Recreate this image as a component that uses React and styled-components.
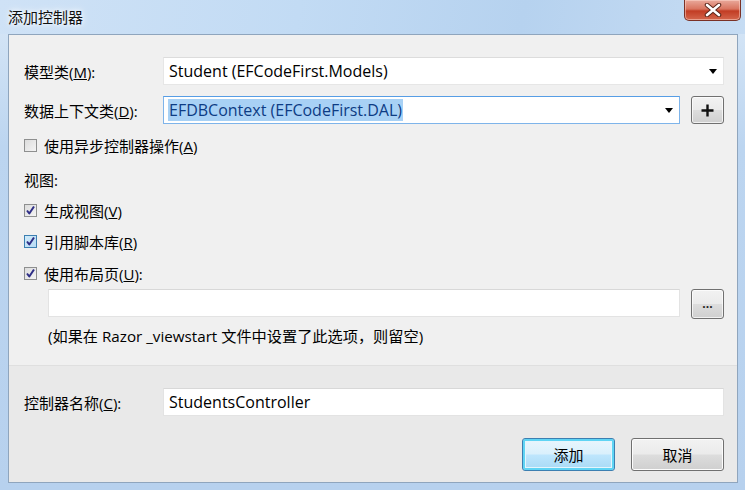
import styled, { createGlobalStyle } from "styled-components";

const GlobalStyle = createGlobalStyle`
  html, body { margin: 0; padding: 0; background: #bcd4ee; }
  body { font-family: "Open Sans", "Noto Sans CJK SC", sans-serif; }
`;

const FONT = `"Open Sans", "Noto Sans CJK SC", sans-serif`;

function ArrowIcon() {
  return (
    <svg width="8" height="5" viewBox="0 0 8 5">
      <path d="M0 0 H8 L4 5 Z" fill="#000" />
    </svg>
  );
}

function CheckMark() {
  return (
    <svg width="11" height="11" viewBox="0 0 11 11">
      <path d="M2 5.5 L4.3 8.5 L9 1.5" fill="none" stroke="#2e2e86" strokeWidth="2" strokeLinejoin="round" />
    </svg>
  );
}

function Checkbox({ checked, hot, children }) {
  return (
    <CheckRow>
      <Box $hot={hot}>{checked && <CheckMark />}</Box>
      <span>{children}</span>
    </CheckRow>
  );
}

function Select({ value, focused, highlight }) {
  return (
    <SelectBox $focused={focused}>
      <SelectText $highlight={highlight}>{value}</SelectText>
      <ArrowIcon />
    </SelectBox>
  );
}

export default function App() {
  return (
    <>
      <GlobalStyle />
      <Window>
        <TitleBar>
          <Title>添加控制器</Title>
          <CloseButton>
            <svg width="18" height="14" viewBox="0 0 18 14">
              <path d="M3 2 L15 12 M15 2 L3 12" stroke="#5a2418" strokeWidth="4.5" strokeLinecap="round" />
              <path d="M3 2 L15 12 M15 2 L3 12" stroke="#fff" strokeWidth="2.6" strokeLinecap="round" />
            </svg>
          </CloseButton>
        </TitleBar>
        <Body>
          <Upper>
            <FieldRow $top={22}>
              <Label><span>模型类(<u>M</u>):</span></Label>
              <Select value="Student (EFCodeFirst.Models)" />
            </FieldRow>
            <FieldRow $top={11}>
              <Label><span>数据上下文类(<u>D</u>):</span></Label>
              <Select value="EFDBContext (EFCodeFirst.DAL)" focused highlight />
              <SmallButton>
                <svg width="13" height="13" viewBox="0 0 13 13">
                  <path d="M6.5 0.5 V12.5 M0.5 6.5 H12.5" stroke="#111" strokeWidth="2.4" />
                </svg>
              </SmallButton>
            </FieldRow>
            <Line $top={11}>
              <Checkbox>使用异步控制器操作(<u>A</u>)</Checkbox>
            </Line>
            <Line $top={14}>
              <Caption>视图:</Caption>
            </Line>
            <Line $top={11}>
              <Checkbox checked>生成视图(<u>V</u>)</Checkbox>
            </Line>
            <Line $top={11}>
              <Checkbox checked hot>引用脚本库(<u>R</u>)</Checkbox>
            </Line>
            <Line $top={12}>
              <Checkbox checked>使用布局页(<u>U</u>):</Checkbox>
            </Line>
            <IndentRow>
              <TextInput />
              <SmallButton $dots>...</SmallButton>
            </IndentRow>
            <Hint>(如果在 Razor _viewstart 文件中设置了此选项，则留空)</Hint>
          </Upper>
          <Lower>
            <FieldRow $top={0}>
              <Label><span>控制器名称(<u>C</u>):</span></Label>
              <TextInput>StudentsController</TextInput>
            </FieldRow>
            <Buttons>
              <DialogButton $default>添加</DialogButton>
              <DialogButton>取消</DialogButton>
            </Buttons>
          </Lower>
        </Body>
      </Window>
    </>
  );
}

const Window = styled.div`
  width: 745px;
  height: 490px;
  box-sizing: border-box;
  display: flex;
  flex-direction: column;
  background: linear-gradient(180deg, #d9e8f7 0%, #bcd5f0 30%, #b7d1ee 100%);
  font-family: ${FONT};
  font-size: 15px;
  color: #000;
`;

const TitleBar = styled.div`
  height: 34px;
  flex: none;
  display: flex;
  align-items: flex-start;
  justify-content: space-between;
  padding: 0 4px 0 8px;
  background: linear-gradient(100deg, #cfe2f6 0%, #c2dbf4 40%, #b6d2ef 70%, #c6dcf3 100%);
`;

const Title = styled.div`
  margin-top: 7px;
  font-size: 15px;
  line-height: 20px;
  color: #111;
  text-shadow: 0 0 8px #fff, 0 0 4px #fff;
`;

const CloseButton = styled.div`
  width: 57px;
  height: 21px;
  box-sizing: border-box;
  border: 1px solid #7a3126;
  border-top: none;
  border-radius: 0 0 5px 5px;
  background: linear-gradient(180deg, #e9a99b 0%, #d9745f 45%, #c23d24 55%, #d4664c 100%);
  box-shadow: inset 0 0 0 1px rgba(255, 220, 210, 0.5);
  display: flex;
  align-items: center;
  justify-content: center;
`;

const Body = styled.div`
  flex: 1;
  margin: 0 7px 7px 8px;
  border: 1px solid #8fa5bd;
  display: flex;
  flex-direction: column;
  background: #f0f0f0;
`;

const Upper = styled.div`
  height: 331px;
  box-sizing: border-box;
  padding: 0 13px 0 15px;
  display: flex;
  flex-direction: column;
  border-bottom: 1px solid #dfdfdf;
`;

const Lower = styled.div`
  flex: 1;
  padding: 22px 13px 0 15px;
  background: #e9e9e9;
  display: flex;
  flex-direction: column;
`;

const FieldRow = styled.div`
  display: flex;
  align-items: center;
  height: 28px;
  margin-top: ${p => p.$top}px;
`;

const Label = styled.div`
  width: 139px;
  flex: none;
  white-space: nowrap;
`;

const SelectBox = styled.div`
  flex: 1;
  height: 28px;
  box-sizing: border-box;
  display: flex;
  align-items: center;
  justify-content: space-between;
  padding: 0 6px 0 4px;
  background: #fff;
  font-size: 16px;
  border: 1px solid ${p => (p.$focused ? "#7eb4ea" : "#e6e6e6")};
  border-top-color: ${p => (p.$focused ? "#569de5" : "#dcdcdc")};
`;

const SelectText = styled.span`
  padding: 0 1px;
  background: ${p => (p.$highlight ? "#a8d1f5" : "transparent")};
  color: ${p => (p.$highlight ? "#0d3c84" : "#000")};
`;

const SmallButton = styled.div`
  width: 33px;
  height: ${p => (p.$dots ? 30 : 28)}px;
  box-sizing: border-box;
  margin-left: 11px;
  flex: none;
  border: 1px solid #707070;
  border-radius: 3px;
  background: linear-gradient(180deg, #f2f2f2 0%, #ebebeb 49%, #dddddd 51%, #cfcfcf 100%);
  box-shadow: inset 0 0 0 1px rgba(255, 255, 255, 0.7);
  display: flex;
  align-items: center;
  justify-content: center;
  font-size: 12px;
  font-weight: bold;
  line-height: 1;
  color: #222;
`;

const Line = styled.div`
  height: 20px;
  display: flex;
  align-items: center;
  margin-top: ${p => p.$top}px;
`;

const Caption = styled.span`
  white-space: nowrap;
`;

const CheckRow = styled.div`
  display: flex;
  align-items: center;
  gap: 7px;
  white-space: nowrap;
`;

const Box = styled.span`
  width: 13px;
  height: 13px;
  box-sizing: border-box;
  border: 1px solid ${p => (p.$hot ? "#3c7fb1" : "#8e8f8f")};
  background: ${p =>
    p.$hot
      ? "linear-gradient(135deg, #cfeaf9 0%, #b9dcf5 100%)"
      : "linear-gradient(135deg, #dcdcdc 0%, #f4f4f4 100%)"};
  display: flex;
  align-items: center;
  justify-content: center;
`;

const IndentRow = styled.div`
  display: flex;
  align-items: flex-start;
  margin-top: 6px;
  padding-left: 24px;
  height: 30px;
`;

const TextInput = styled.div`
  flex: 1;
  height: 28px;
  box-sizing: border-box;
  background: #fff;
  border: 1px solid #e3e3e3;
  border-top-color: #d8d8d8;
  display: flex;
  align-items: center;
  padding-left: 5px;
  font-size: 16px;
  white-space: nowrap;
`;

const Hint = styled.div`
  margin-top: 7px;
  padding-left: 24px;
  height: 20px;
  line-height: 20px;
  font-size: 15.2px;
  white-space: nowrap;
`;

const Buttons = styled.div`
  display: flex;
  justify-content: flex-end;
  gap: 16px;
  margin-top: 22px;
`;

const DialogButton = styled.div`
  width: 93px;
  height: 33px;
  box-sizing: border-box;
  border: 1px solid ${p => (p.$default ? "#3c7fb1" : "#707070")};
  border-radius: 3px;
  background: ${p =>
    p.$default
      ? "linear-gradient(180deg, #eaf6fd 0%, #d9f0fc 49%, #bee6fd 51%, #a7d9f5 100%)"
      : "linear-gradient(180deg, #f2f2f2 0%, #ebebeb 49%, #dddddd 51%, #cfcfcf 100%)"};
  box-shadow: ${p =>
    p.$default ? "inset 0 0 0 2px #5fd4f4, inset 0 0 0 3px #e5f5fc" : "inset 0 0 0 1px #fcfcfc"};
  display: flex;
  align-items: center;
  justify-content: center;
`;
